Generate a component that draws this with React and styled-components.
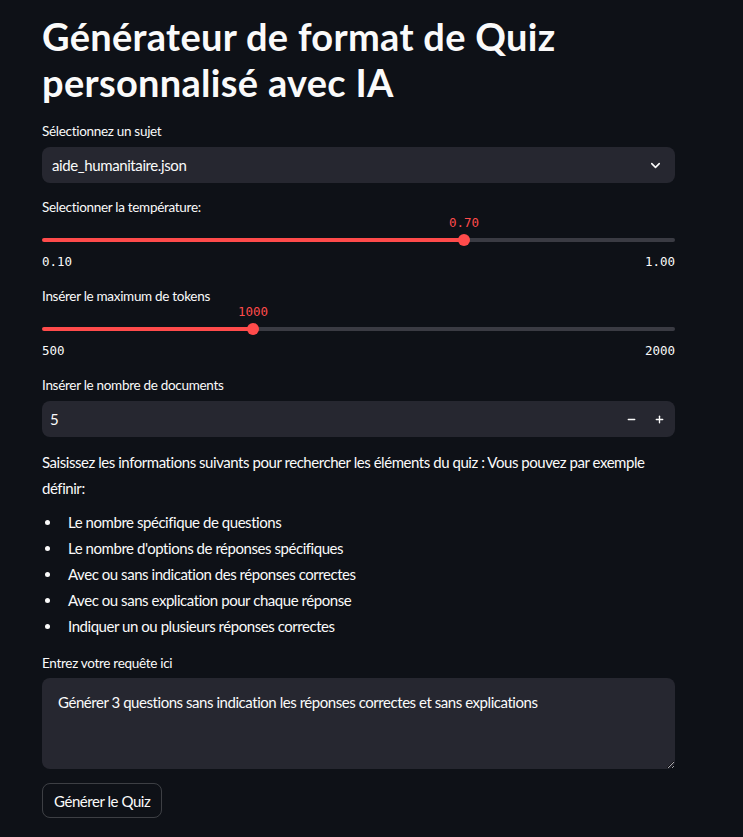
import React from 'react';
import styled, { createGlobalStyle } from 'styled-components';
import { ChevronDown, Minus, Plus } from 'lucide-react';

const GlobalStyle = createGlobalStyle`
  html, body {
    margin: 0;
    padding: 0;
    background: #0e1117;
  }
  body {
    font-family: "Source Sans Pro", Lato, sans-serif;
    color: #fafafa;
  }
`;

const Main = styled.div`
  display: flex;
  flex-direction: column;
  width: 633px;
  padding: 14px 0 40px 42px;
`;

const Title = styled.h1`
  margin: 0 0 16px;
  font-size: 38px;
  line-height: 1.2;
  font-weight: 700;
  letter-spacing: 0.3px;
`;

const Field = styled.div`
  display: flex;
  flex-direction: column;
  margin-bottom: ${p => p.mb || 14}px;
`;

const Label = styled.label`
  font-size: 13.5px;
  letter-spacing: -0.3px;
  line-height: 20px;
  margin-bottom: ${p => p.gap || 0}px;
`;

const Select = styled.div`
  display: flex;
  align-items: center;
  justify-content: space-between;
  height: 36px;
  padding: 0 12px 0 10px;
  background: #262730;
  border-radius: 8px;
  font-size: 15px;
  letter-spacing: -0.4px;
`;

const TrackArea = styled.div`
  position: relative;
  height: 18px;
  margin-top: 14px;
  display: flex;
  align-items: center;
`;

const Track = styled.div`
  width: 100%;
  height: 4px;
  border-radius: 2px;
  background: linear-gradient(
    to right,
    #ff4b4b 0%,
    #ff4b4b ${p => p.pct}%,
    #3a3b43 ${p => p.pct}%,
    #3a3b43 100%
  );
`;

const Thumb = styled.div`
  position: absolute;
  top: 50%;
  width: 12px;
  height: 12px;
  margin: -6px 0 0 -6px;
  border-radius: 50%;
  background: #ff4b4b;
`;

const ThumbValue = styled.div`
  position: absolute;
  top: -18px;
  transform: translateX(-50%);
  font-family: "DejaVu Sans Mono", "Liberation Mono", monospace;
  font-size: 12.5px;
  line-height: 20px;
  color: #ff4b4b;
  white-space: nowrap;
`;

const Ticks = styled.div`
  display: flex;
  justify-content: space-between;
  margin-top: 3px;
  font-family: "DejaVu Sans Mono", "Liberation Mono", monospace;
  font-size: 12.5px;
  line-height: 20px;
`;

const NumberBox = styled.div`
  display: flex;
  align-items: center;
  height: 36px;
  padding: 0 2px 0 8px;
  background: #262730;
  border-radius: 8px;
  font-size: 15px;
`;

const NumberValue = styled.span`
  flex: 1;
`;

const StepButton = styled.span`
  display: flex;
  align-items: center;
  justify-content: center;
  width: 28px;
  height: 36px;
  color: #fafafa;
`;

const Paragraph = styled.p`
  margin: 0 0 8px;
  font-size: 15px;
  letter-spacing: -0.45px;
  line-height: 25.6px;
`;

const List = styled.ul`
  margin: 0 0 14px;
  padding: 0;
  list-style: none;
  font-size: 15px;
  letter-spacing: -0.45px;
  line-height: 26px;
`;

const Item = styled.li`
  position: relative;
  padding-left: 26px;

  &::before {
    content: '';
    position: absolute;
    left: 3px;
    top: 11px;
    width: 5px;
    height: 5px;
    border-radius: 50%;
    background: #fafafa;
  }
`;

const TextArea = styled.textarea`
  box-sizing: border-box;
  height: 91px;
  padding: 12px 16px;
  border: none;
  outline: none;
  border-radius: 8px;
  background: #262730;
  color: #fafafa;
  font-family: inherit;
  font-size: 15px;
  letter-spacing: -0.45px;
  line-height: 25.6px;
  resize: vertical;
`;

const Button = styled.button`
  align-self: flex-start;
  height: 35px;
  padding: 0 11px;
  border: 1px solid rgba(250, 250, 250, 0.2);
  border-radius: 8px;
  background: transparent;
  color: #fafafa;
  font-family: inherit;
  font-size: 15px;
  letter-spacing: -0.45px;
`;

function Slider({ label, min, max, value, format }) {
  const pct = ((value - min) / (max - min)) * 100;
  return (
    <Field>
      <Label>{label}</Label>
      <TrackArea>
        <Track pct={pct} />
        <Thumb style={{ left: `${pct}%` }} />
        <ThumbValue style={{ left: `${pct}%` }}>{format(value)}</ThumbValue>
      </TrackArea>
      <Ticks>
        <span>{format(min)}</span>
        <span>{format(max)}</span>
      </Ticks>
    </Field>
  );
}

const items = [
  'Le nombre spécifique de questions',
  "Le nombre d'options de réponses spécifiques",
  'Avec ou sans indication des réponses correctes',
  'Avec ou sans explication pour chaque réponse',
  'Indiquer un ou plusieurs réponses correctes',
];

function App() {
  return (
    <Main>
      <GlobalStyle />
      <Title>Générateur de format de Quiz personnalisé avec IA</Title>

      <Field>
        <Label gap={6}>Sélectionnez un sujet</Label>
        <Select>
          <span>aide_humanitaire.json</span>
          <ChevronDown size={15} strokeWidth={2.5} />
        </Select>
      </Field>

      <Slider
        label="Selectionner la température:"
        min={0.1}
        max={1}
        value={0.7}
        format={v => v.toFixed(2)}
      />

      <Slider
        label="Insérer le maximum de tokens"
        min={500}
        max={2000}
        value={1000}
        format={v => String(v)}
      />

      <Field mb={13}>
        <Label gap={6}>Insérer le nombre de documents</Label>
        <NumberBox>
          <NumberValue>5</NumberValue>
          <StepButton><Minus size={11} strokeWidth={3} /></StepButton>
          <StepButton><Plus size={11} strokeWidth={3} /></StepButton>
        </NumberBox>
      </Field>

      <Paragraph>
        Saisissez les informations suivants pour rechercher les éléments du quiz : Vous pouvez par exemple définir:
      </Paragraph>
      <List>
        {items.map(item => (
          <Item key={item}>{item}</Item>
        ))}
      </List>

      <Field>
        <Label gap={5}>Entrez votre requête ici</Label>
        <TextArea defaultValue="Générer 3 questions sans indication les réponses correctes et sans explications" />
      </Field>

      <Button>Générer le Quiz</Button>
    </Main>
  );
}

export default App;
